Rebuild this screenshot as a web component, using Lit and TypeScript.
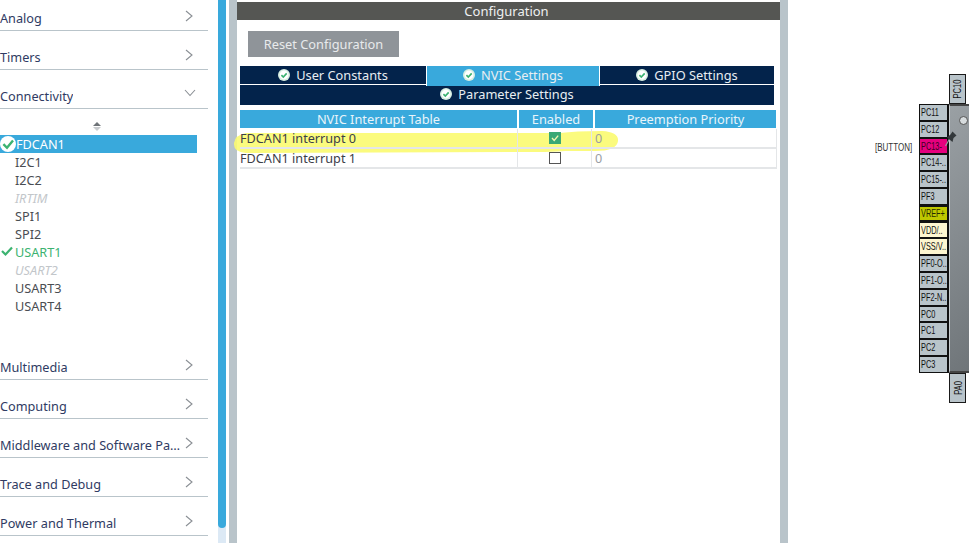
import { LitElement, html, css, svg } from "lit";
import { customElement } from "lit/decorators.js";

const chevR = html`<svg class="chev" width="10" height="12" viewBox="0 0 10 12"><path d="M2 1 L8 6 L2 11" fill="none" stroke="#8a8f94" stroke-width="1.1"/></svg>`;
const chevD = html`<svg class="chev down" width="12" height="10" viewBox="0 0 12 10"><path d="M1 2 L6 7.5 L11 2" fill="none" stroke="#8a8f94" stroke-width="1.1"/></svg>`;
const okIcon = html`<svg class="ok" width="12" height="12" viewBox="0 0 12 12"><circle cx="6" cy="6" r="6" fill="#d8efe2"/><circle cx="6" cy="6" r="4.4" fill="#fff"/><path d="M3.4 6.1 L5.3 8 L8.7 4.4" fill="none" stroke="#3cb371" stroke-width="1.7"/></svg>`;

const topCats = ["Analog", "Timers"];
const bottomCats = ["Multimedia", "Computing", "Middleware and Software Packs", "Trace and Debug", "Power and Thermal"];
const items: [string, string][] = [
  ["I2C1", ""], ["I2C2", ""], ["IRTIM", "off"], ["SPI1", ""], ["SPI2", ""],
  ["USART1", "on"], ["USART2", "off"], ["USART3", ""], ["USART4", ""],
];
const pins: [string, string][] = [
  ["PC11", ""], ["PC12", ""], ["PC13-", "pink"], ["PC14-..", ""], ["PC15-..", ""], ["PF3", ""],
  ["VREF+", "olive"], ["VDD/..", "cream"], ["VSS/V..", "cream"], ["PF0-O..", ""], ["PF1-O..", ""],
  ["PF2-N..", ""], ["PC0", ""], ["PC1", ""], ["PC2", ""], ["PC3", ""],
];

@customElement("app-root")
export class AppRoot extends LitElement {
  static styles = css`
    :host { display: block; width: 969px; height: 543px; overflow: hidden; position: relative; background: #fff;
      font-family: "Noto Sans", "Open Sans", sans-serif; font-size: 12.8px; color: #3b3f46; }
    .page { display: grid; grid-template-columns: 208px 10px 8px 3px 8px 543px 8px 181px; height: 543px; }
    .nav { display: flex; flex-direction: column; margin-top: -8px; font-size: 12.7px; }
    .cat { height: 35px; flex: none; border-bottom: 1px solid #b9c4ca; display: flex; align-items: flex-end; justify-content: space-between; color: #2f3b63; line-height: 18px; padding-bottom: 3px; box-sizing: content-box; }
    .cat span { white-space: nowrap; overflow: hidden; text-overflow: ellipsis; max-width: 183px; }
    .chev { margin: 0 14px 5px 0; flex: none; }
    .chev.down { margin: 0 12px 7px 0; }
    .list { height: 232px; flex: none; display: flex; flex-direction: column; }
    .sort { height: 26px; flex: none; display: flex; flex-direction: column; align-items: center; justify-content: flex-end; gap: 1px; padding: 0 14px 4px 0; box-sizing: border-box; }
    .up { width: 0; height: 0; border: 4px solid transparent; border-top: 0; border-bottom: 4px solid #6f7478; }
    .dn { width: 0; height: 0; border: 4px solid transparent; border-bottom: 0; border-top: 4px solid #c8cbce; }
    .item { height: 18px; flex: none; line-height: 18px; padding-left: 15px; width: 197px; box-sizing: border-box; position: relative; color: #4a4d52; }
    .item.sel { background: #39a9dc; color: #fff; padding-left: 16px; }
    .item.off { color: #c2c6ca; font-style: italic; }
    .item.on { color: #3cb371; }
    .mark { position: absolute; left: 1px; top: 2px; }
    .mark.big { left: 0; top: 0; }
    .scroll { background: #39a9dc; height: 528px; flex: none; border-radius: 0 0 4px 4px; }
    .scroll-wrap { display: flex; flex-direction: column; background: #dce9f5; height: 543px; }
    .sep { background: #b9c4ca; }
    .panel { display: flex; flex-direction: column; background: #fff; padding-top: 2px; }
    .hd { height: 18px; flex: none; background: #555653; color: #eef0f0; text-align: center; line-height: 18px; font-size: 13px; padding-right: 4px; }
    .btn { flex: none; align-self: flex-start; margin: 11px 0 9px 11px; width: 151px; height: 26px; background: #8f9499; color: #e8eaec; text-align: center; line-height: 26px; }
    .tabs { margin: 0 6px 0 3px; flex: none; display: flex; flex-direction: column; gap: 1px; }
    .tabrow { display: grid; grid-template-columns: 186px 174px 174px; height: 18px; }
    .tab { background: #03234b; color: #e8eef2; display: flex; align-items: center; justify-content: center; gap: 6px; height: 18px; line-height: 18px; box-sizing: border-box; }
    .tab.act { background: #39a9dc; height: 20px; padding-bottom: 2px; border-left: 1px solid #fff; border-right: 1px solid #fff; position: relative; z-index: 1; }
    .tabrow2 { height: 20px; padding-bottom: 2px; }
    .table { margin: 5px 3px 0 3px; display: grid; grid-template-columns: 277px 2px 74px 2px 182px; flex: none; position: relative; z-index: 2; font-size: 12.67px; }
    .th { background: #39a9dc; color: #e8f4fa; height: 18px; text-align: center; line-height: 18px; margin-bottom: 1px; font-size: 12.8px; }
    .th.p { margin-right: 1px; }
    .td { border-bottom: 2px solid #e4e6e8; line-height: 18px; height: 18px; color: #3b4048; white-space: nowrap; }
    .td.vb { border-left: 1px solid #e4e6e8; margin-left: -2px; }
    .td.last { border-right: 1px solid #e4e6e8; color: #9a9ea3; }
    .td.center { display: flex; justify-content: center; align-items: center; padding-right: 1px; }
    .cb { width: 12px; height: 12px; box-sizing: border-box; border: 1px solid #555; display: block; }
    .cb.checked { border: 0; background: #3aa876; display: flex; }
    .canvas { background: #fff; }
    .chip-area { display: flex; padding-top: 74px; flex-direction: column; align-items: flex-start; margin-left: 131px; }
    .toprow { display: flex; margin-left: 30px; gap: 3px; height: 30px; flex: none; }
    .vpin { width: 15px; height: 28px; border: 1px solid #1a1a1a; background: #b9c4ca; display: flex; align-items: center; justify-content: center; }
    .vpin span { font: 10.5px "Liberation Sans", sans-serif; transform: rotate(-90deg) scaleX(.72); white-space: nowrap; color: #111; }
    .mid { display: flex; flex: none; height: 269px; }
    .pins { display: flex; flex-direction: column; width: 30px; flex: none; }
    .pin { height: 16.8px; flex: none; box-sizing: border-box; border: 1px solid #111; border-right-width: 2px; background: #b9c4ca; color: #111; font: 10.5px/15px "Liberation Sans", sans-serif; padding-left: 1px; white-space: nowrap; }
    .pin span { display: block; width: 36px; transform: scaleX(.7); transform-origin: 0 50%; }
    .pin.pink { background: #e6007e; color: #3a0022; }
    .pin.olive { background: #bfc800; color: #2a2a00; border-width: 2px 2px 2px 1px; line-height: 13px; }
    .pin.cream { background: #fdf6d0; }
    .body { width: 20px; background: linear-gradient(135deg, #9aa0a4, #6f7579); border-top: 2px solid #444; border-bottom: 2px solid #444; border-left: 1px solid #c9cdcf; box-sizing: border-box; position: relative; }
    .dot { position: absolute; left: 9px; top: 10px; width: 9px; height: 9px; border-radius: 50%; background: #d6dbdd; border: 1px solid #555; box-sizing: border-box; }
    .label { position: absolute; left: 875px; top: 141px; font: 10px/13px "Liberation Sans", sans-serif; color: #333; transform: scaleX(.8); transform-origin: 0 50%; white-space: nowrap; }
    .pushpin { position: absolute; left: 944px; top: 130px; z-index: 3; }
    .hl { position: absolute; left: 230px; top: 126px; pointer-events: none; z-index: 1; }
  `;

  private cat(name: string, open = false) {
    return html`<div class="cat"><span>${name}</span>${open ? chevD : chevR}</div>`;
  }

  render() {
    return html`
      <div class="page">
        <div class="nav">
          ${topCats.map((c) => this.cat(c))}
          ${this.cat("Connectivity", true)}
          <div class="list">
            <div class="sort"><div class="up"></div><div class="dn"></div></div>
            <div class="item sel"><svg class="mark big" width="18" height="18" viewBox="0 0 18 18"><circle cx="8" cy="9" r="8" fill="#fff"/><path d="M3.4 9.2 L7 12.8 L13 5.6" fill="none" stroke="#3cb371" stroke-width="2.4"/></svg>FDCAN1</div>
            ${items.map(([n, k]) => html`<div class="item ${k}">${k === "on" ? html`<svg class="mark" width="12" height="12" viewBox="0 0 12 12"><path d="M1 6 L4.5 9.5 L11 2.5" fill="none" stroke="#3cb371" stroke-width="2.2"/></svg>` : ""}${n}</div>`)}
          </div>
          ${bottomCats.map((c) => this.cat(c))}
        </div>
        <div></div>
        <div class="scroll-wrap"><div class="scroll"></div></div>
        <div></div>
        <div class="sep"></div>
        <div class="panel">
          <div class="hd">Configuration</div>
          <div class="btn">Reset Configuration</div>
          <div class="tabs">
            <div class="tabrow">
              <div class="tab">${okIcon}User Constants</div>
              <div class="tab act">${okIcon}NVIC Settings</div>
              <div class="tab">${okIcon}GPIO Settings</div>
            </div>
            <div class="tab tabrow2">${okIcon}Parameter Settings</div>
          </div>
          <div class="table">
            <div class="th">NVIC Interrupt Table</div><div></div><div class="th">Enabled</div><div></div><div class="th p">Preemption Priority</div>
            <div class="td">FDCAN1 interrupt 0</div><div class="td"></div><div class="td vb center"><span class="cb checked"><svg width="12" height="12" viewBox="0 0 12 12"><path d="M3 6 L5.2 8.4 L9.2 3.6" fill="none" stroke="#f4f6b0" stroke-width="1.4"/></svg></span></div><div class="td vb"></div><div class="td last">0</div>
            <div class="td">FDCAN1 interrupt 1</div><div class="td"></div><div class="td vb center"><span class="cb"></span></div><div class="td vb"></div><div class="td last">0</div>
          </div>
        </div>
        <div class="sep"></div>
        <div class="canvas">
          <div class="chip-area">
            <div class="toprow"><div class="vpin"><span>PC10</span></div></div>
            <div class="mid">
              <div class="pins">${pins.map(([n, k]) => html`<div class="pin ${k}"><span>${n}</span></div>`)}</div>
              <div class="body"><div class="dot"></div></div>
            </div>
            <div class="toprow"><div class="vpin"><span>PA0</span></div></div>
          </div>
        </div>
      </div>
      <div class="label">[BUTTON]</div>
      <svg class="pushpin" width="14" height="18" viewBox="0 0 14 18"><path d="M1.5 16 L5.5 9" stroke="#9a9ea2" stroke-width="1.2"/><path d="M3 7.5 L8.5 12 L9.5 8 L12.5 5.5 L8.5 1.5 L6.5 4.5 Z" fill="#33383b"/></svg>
      <svg class="hl" width="400" height="32" viewBox="0 0 400 32">${svg`<path d="M16 7 L330 7 Q345 5 372 5 Q389 6 388 15 Q387 25 365 25 L335 25 Q320 26 310 26 L16 27 Q3 26 4 17 Q5 9 16 7 Z" fill="#fbfb70" fill-opacity=".9"/>`}</svg>
    `;
  }
}
